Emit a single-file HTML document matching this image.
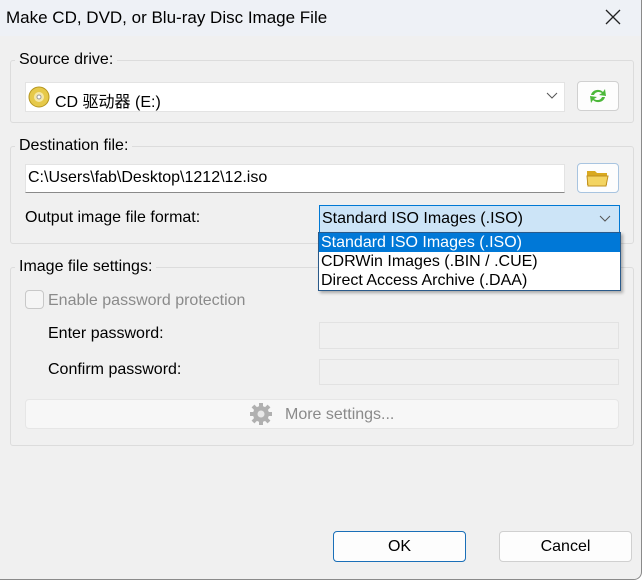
<!DOCTYPE html>
<html><head><meta charset="utf-8"><style>
*{box-sizing:border-box;margin:0;padding:0}
body{width:644px;height:582px;background:#fff;font-family:"Liberation Sans","Noto Sans CJK SC",sans-serif;font-size:16px;color:#000;position:relative;overflow:hidden}
.win{position:absolute;left:0;top:0;width:642px;height:580px;background:#f0f0f0;border:1px solid #8a8a8a;border-top:none;border-left:none;border-radius:0 0 8px 0;overflow:hidden}
.title{position:absolute;left:0;top:0;width:642px;height:36px;background:#eef1f6}
.a{position:absolute;white-space:nowrap}
.grp{position:absolute;border:1px solid #dcdcdc;border-radius:3px}
.lbl{position:absolute;background:#f0f0f0;padding:0 4px;white-space:nowrap}
.box{position:absolute;background:#fff;border:1px solid #e3e3e3;border-bottom:1px solid #8a8a8a}
.btn{position:absolute;background:#fdfdfd;border:1px solid #d0d0d0;border-radius:4px}
.dis{position:absolute;background:#f0f0f0;border:1px solid #e2e2e2}
</style></head><body><div class="win">
<div class="title"></div>
<div class="a" style="left:6px;top:8px;font-size:17px">Make CD, DVD, or Blu-ray Disc Image File</div>
<svg class="a" style="left:605px;top:9px" width="16" height="16"><path d="M1 1L15 15M15 1L1 15" stroke="#222" stroke-width="1.3"/></svg>

<div class="grp" style="left:10px;top:60px;width:624px;height:63px"></div>
<div class="lbl" style="left:15px;top:51px">Source drive:</div>
<div class="box" style="left:25px;top:82px;width:540px;height:30px;border-bottom-color:#e3e3e3"></div>
<svg class="a" style="left:28px;top:86px" width="22" height="22"><circle cx="11" cy="11" r="10" fill="#e6c94a" stroke="#b59620"/><circle cx="11" cy="11" r="5" fill="#f5e8a8"/><circle cx="11" cy="11" r="2" fill="#fff" stroke="#999"/></svg>
<div class="a" style="left:55px;top:88px">CD 驱动器 (E:)</div>
<svg class="a" style="left:546px;top:92px" width="12" height="8"><path d="M1 1L6 6L11 1" stroke="#555" fill="none"/></svg>
<div class="btn" style="left:577px;top:81px;width:42px;height:30px"></div>
<svg class="a" style="left:587px;top:85px" width="22" height="22"><path d="M4 10C5 5 12 3 16 7L18 4L19 11L12 10L15 8C12 6 8 7 7 10Z" fill="#4cb83a"/><path d="M18 12C17 17 10 19 6 15L4 18L3 11L10 12L7 14C10 16 14 15 15 12Z" fill="#4cb83a"/></svg>

<div class="grp" style="left:10px;top:146px;width:624px;height:98px"></div>
<div class="lbl" style="left:15px;top:137px">Destination file:</div>
<div class="box" style="left:25px;top:164px;width:540px;height:29px"></div>
<div class="a" style="left:28px;top:169px">C:\Users\fab\Desktop\1212\12.iso</div>
<div class="btn" style="left:577px;top:163px;width:42px;height:30px;border-color:#a8c4e0"></div>
<svg class="a" style="left:586px;top:168px" width="24" height="20"><path d="M1 3H9L11 5H21V17H1Z" fill="#d9a920"/><path d="M1 8H22L20 18H2Z" fill="#f3d462" stroke="#c09020"/></svg>
<div class="a" style="left:25px;top:209px">Output image file format:</div>
<div class="a" style="left:319px;top:205px;width:301px;height:28px;background:#cce4f7;border:1px solid #0078d4"></div>
<div class="a" style="left:322px;top:210px">Standard ISO Images (.ISO)</div>
<svg class="a" style="left:599px;top:215px" width="12" height="8"><path d="M1 1L6 6L11 1" stroke="#555" fill="none"/></svg>

<div class="grp" style="left:10px;top:267px;width:624px;height:179px"></div>
<div class="lbl" style="left:15px;top:258px">Image file settings:</div>
<div class="a" style="left:25px;top:290px;width:19px;height:19px;border:1px solid #c8c8c8;border-radius:4px;background:#f5f5f5"></div>
<div class="a" style="left:48px;top:292px;color:#8a8a8a">Enable password protection</div>
<div class="a" style="left:48px;top:325px">Enter password:</div>
<div class="dis" style="left:319px;top:322px;width:300px;height:27px"></div>
<div class="a" style="left:48px;top:361px">Confirm password:</div>
<div class="dis" style="left:319px;top:359px;width:300px;height:26px"></div>
<div class="btn" style="left:25px;top:399px;width:594px;height:30px;background:#f7f7f7;border-color:#e6e6e6"></div>
<svg class="a" style="left:249px;top:402px" width="24" height="24"><g fill="#b0b0b0"><circle cx="12" cy="12" r="8"/><g stroke="#b0b0b0" stroke-width="4"><path d="M12 1V23M1 12H23M4 4L20 20M20 4L4 20"/></g></g><circle cx="12" cy="12" r="3.5" fill="#e8e8e8"/></svg>
<div class="a" style="left:285px;top:406px;color:#8a8a8a">More settings...</div>

<div class="a" style="left:318px;top:232px;width:303px;height:59px;background:#fff;border:1px solid #2a5a8a;box-shadow:2px 2px 3px rgba(0,0,0,.3)"></div>
<div class="a" style="left:319px;top:233px;width:301px;height:19px;background:#0078d7"></div>
<div class="a" style="left:321px;top:234px;color:#fff">Standard ISO Images (.ISO)</div>
<div class="a" style="left:321px;top:253px">CDRWin Images (.BIN / .CUE)</div>
<div class="a" style="left:321px;top:272px">Direct Access Archive (.DAA)</div>

<div class="btn" style="left:333px;top:531px;width:133px;height:31px;border-color:#1a6fb8"></div>
<div class="a" style="left:333px;top:538px;width:133px;text-align:center">OK</div>
<div class="btn" style="left:499px;top:531px;width:133px;height:31px"></div>
<div class="a" style="left:499px;top:538px;width:133px;text-align:center">Cancel</div>
</div></body></html>
